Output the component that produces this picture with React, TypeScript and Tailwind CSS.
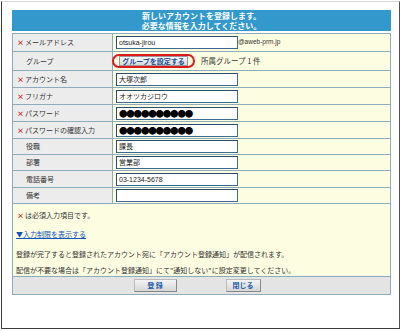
import React from "react";

const jp = { fontFamily: '"Noto Sans CJK JP", "Noto Sans", sans-serif' };
const latin = { fontFamily: '"Liberation Sans", Arial, "Noto Sans CJK JP", sans-serif' };

type Row = {
    label: string;
    required?: boolean;
    value?: string;
    kind?: "text" | "password" | "group" | "email";
    h: string;
};

const rows: Row[] = [
    { label: "メールアドレス", required: true, value: "otsuka-jirou", kind: "email", h: "h-[18px]" },
    { label: "グループ", kind: "group", h: "h-[19px]" },
    { label: "アカウント名", required: true, value: "大塚次郎", h: "h-[17px]" },
    { label: "フリガナ", required: true, value: "オオツカジロウ", h: "h-[17px]" },
    { label: "パスワード", required: true, value: "●●●●●●●●●●", kind: "password", h: "h-[17px]" },
    { label: "パスワードの確認入力", required: true, value: "●●●●●●●●●●", kind: "password", h: "h-[17px]" },
    { label: "役職", value: "課長", h: "h-[16px]" },
    { label: "部署", value: "営業部", h: "h-[16px]" },
    { label: "電話番号", value: "03-1234-5678", h: "h-[17px]" },
    { label: "備考", value: "", h: "h-[16px]" },
];

function Mark() {
    return <span className="inline-block w-[9px] pl-[1px] text-[7px] font-bold leading-none text-[#d01818]">×</span>;
}

function Field({ value, password }: { value: string; password?: boolean }) {
    return (
        <div className="flex h-[13px] w-[122px] items-center overflow-hidden border border-[#3d6a92] border-t-[#2a4d6e] border-l-[#2a4d6e] bg-white pl-[2px]">
            {password ? (
                <span className="text-[8.5px] leading-none tracking-[-1.2px] text-black" style={jp}>
                    {value}
                </span>
            ) : (
                <span className="text-[7px] leading-none text-[#222]" style={latin}>
                    {value}
                </span>
            )}
        </div>
    );
}

export default function App() {
    return (
        <div className="h-[331px] w-[405px] bg-white" style={jp}>
            <div className="ml-[1px] mt-[1px] h-[328px] w-[399px] border border-[#d8d8d8] border-b-[#3a3a3a] border-l-[#3a3a3a] border-r-[#555] bg-white pl-[10px] pr-[7px] pt-[8px]">
                {/* Header */}
                <div className="flex h-[21px] w-[379px] flex-col items-center justify-center bg-[#3399cc] text-[8px] font-bold leading-[10px] text-white">
                    <span>新しいアカウントを登録します。</span>
                    <span>必要な情報を入力してください。</span>
                </div>

                {/* Form */}
                <div className="mt-[2px] w-[379px] border border-[#8eacbc]">
                    {rows.map((r) => (
                        <div key={r.label} className={`flex border-b border-[#8eacbc] ${r.h}`}>
                            <div className="flex w-[100px] items-center border-r border-[#8eacbc] bg-[#ececec] pl-[3px] text-[7px] text-[#333]">
                                {r.required ? <Mark /> : <span className="inline-block w-[10px]" />}
                                <span className="leading-none">{r.label}</span>
                            </div>
                            <div className="flex flex-1 items-center bg-[#fdfde2] pl-[3px]">
                                {r.kind === "group" ? (
                                    <>
                                        <div className="ml-[-4px] flex h-[14px] w-[83px] items-center justify-center rounded-full border-2 border-[#dd1a1a]">
                                            <div className="flex h-[10px] w-[69px] items-center justify-center border border-[#9a9a9a] bg-gradient-to-b from-[#fafafa] to-[#d8d8d8] text-[7px] font-bold leading-none text-[#1f4f9a]">
                                                グループを設定する
                                            </div>
                                        </div>
                                        <span className="ml-[6px] text-[7.5px] leading-none text-[#333]">所属グループ 1 件</span>
                                    </>
                                ) : (
                                    <>
                                        <Field value={r.value ?? ""} password={r.kind === "password"} />
                                        {r.kind === "email" && (
                                            <span className="text-[6.5px] leading-none text-[#333]" style={latin}>
                                                @aweb-prm.jp
                                            </span>
                                        )}
                                    </>
                                )}
                            </div>
                        </div>
                    ))}

                    {/* Notes */}
                    <div className="h-[73px] border-b border-[#8eacbc] bg-[#fdfde2] pl-[3px] pt-[6px] text-[7px] leading-[10px] text-[#333]">
                        <div className="flex items-center">
                            <Mark />
                            <span>は必須入力項目です。</span>
                        </div>
                        <div className="mt-[9px]">
                            <span className="cursor-pointer text-[#1155bb] underline">▼入力制限を表示する</span>
                        </div>
                        <div className="mt-[10px]">登録が完了すると登録されたアカウント宛に「アカウント登録通知」が配信されます。</div>
                        <div className="mt-[6px]">配信が不要な場合は「アカウント登録通知」にて"通知しない"に設定変更してください。</div>
                    </div>

                    {/* Buttons */}
                    <div className="flex h-[17px] items-center justify-center gap-[49px] bg-[#e4e4e4] pr-[9px]">
                        <button className="flex h-[13px] w-[43px] items-center justify-center border border-[#888] border-l-[#bbb] border-t-[#bbb] bg-gradient-to-b from-[#f4f4f4] to-[#d6d6d6] text-[7px] font-bold leading-none text-[#1f5fa8]">
                            登 録
                        </button>
                        <button className="flex h-[13px] w-[35px] items-center justify-center border border-[#888] border-l-[#bbb] border-t-[#bbb] bg-gradient-to-b from-[#f4f4f4] to-[#d6d6d6] text-[7px] font-bold leading-none text-[#1f5fa8]">
                            閉じる
                        </button>
                    </div>
                </div>
            </div>
        </div>
    );
}
